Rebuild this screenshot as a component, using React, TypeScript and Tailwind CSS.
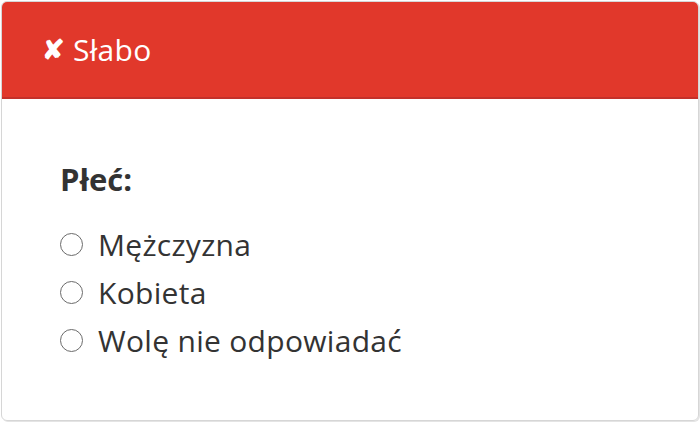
const options = ['Mężczyzna', 'Kobieta', 'Wolę nie odpowiadać'];

function Radio() {
  return <span className="inline-block h-[23px] w-[23px] shrink-0 rounded-full border-[1.5px] border-[#6b6b6b] bg-white" />;
}

export default function App() {
  return (
    <div className="h-[422px] w-[700px] bg-white p-[1px] font-['Open_Sans',sans-serif]">
      <div className="flex h-[420px] flex-col overflow-hidden rounded-[6px] border border-[#d6d6d6] shadow-[1px_1px_0_#e4e4e4]">
        <div className="flex h-[97px] shrink-0 items-center border-b-2 border-[#c3312a] bg-[#e1382b] pl-[40px] text-[30px] text-white">
          <span className="mr-[8px] text-[27px] font-bold">✘</span>
          <span className="tracking-[0.3px]">Słabo</span>
        </div>
        <div className="pl-[58px] pt-[60px] text-[#333]">
          <div className="mb-[21px] text-[31px] font-bold leading-[40px]">Płeć:</div>
          <div className="flex flex-col">
            {options.map((o) => (
              <label key={o} className="flex h-[48px] items-center gap-[15px] text-[30px]">
                <Radio />
                <span className="tracking-[0.3px]">{o}</span>
              </label>
            ))}
          </div>
        </div>
      </div>
    </div>
  );
}
